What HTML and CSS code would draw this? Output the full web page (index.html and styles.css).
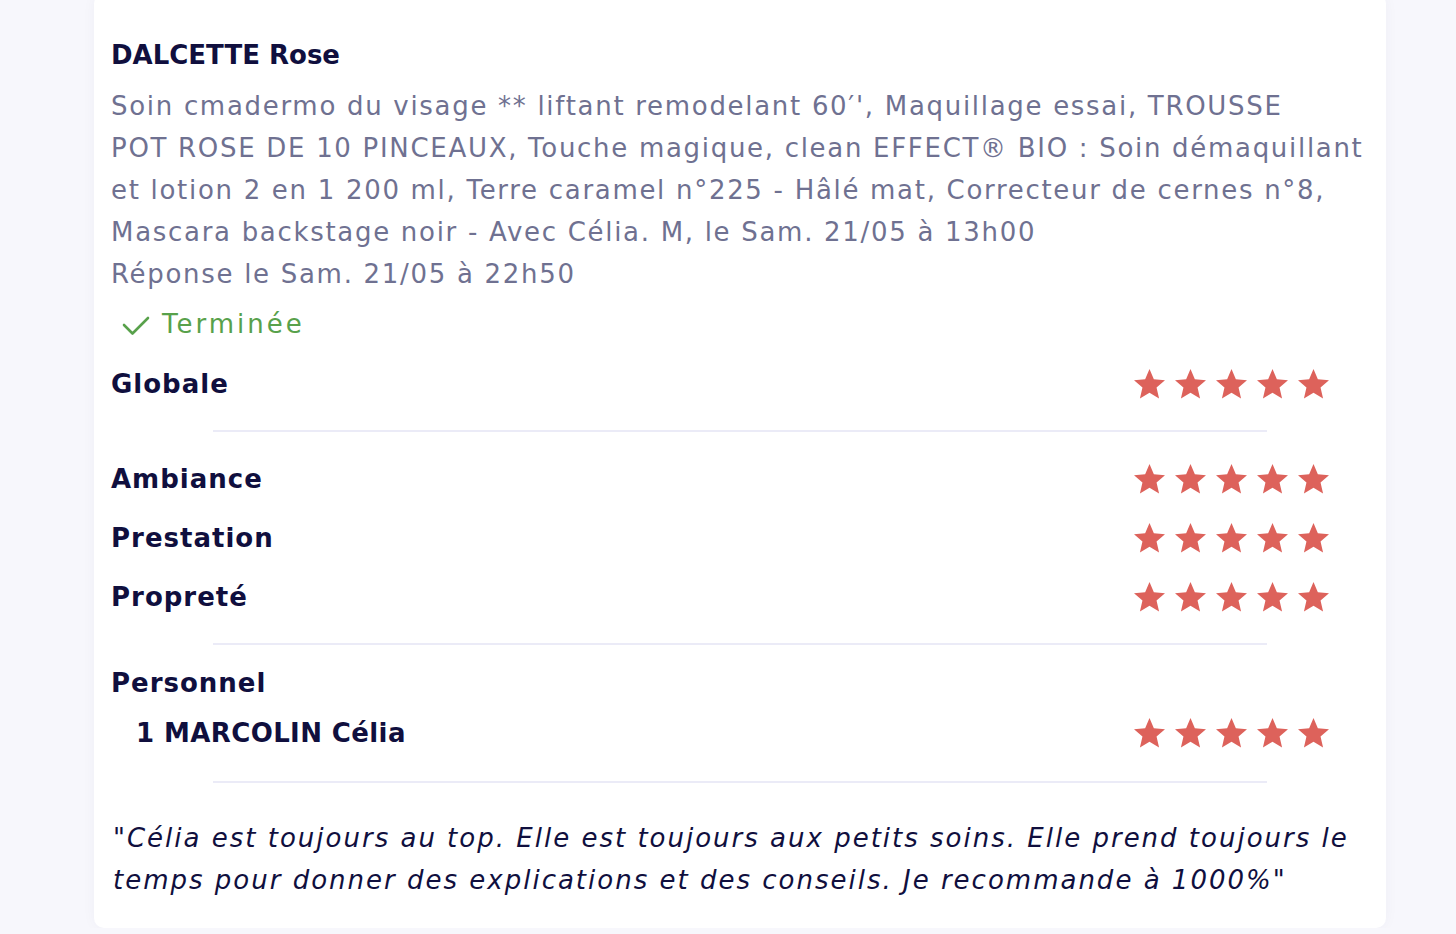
FILE: index.html
```html
<!DOCTYPE html>
<html lang="fr">

<head>
    <meta charset="UTF-8">
    <title>Avis client</title>
    <meta name="viewport" content="width=device-width, initial-scale=1.0">
    <link rel="stylesheet" href="styles.css">
</head>

<body>
    <svg class="sprite" xmlns="http://www.w3.org/2000/svg">
        <symbol id="star" viewBox="2 2 20 19.27">
            <path d="M12 17.27L18.18 21l-1.64-7.03L22 9.24l-7.19-.61L12 2 9.19 8.63 2 9.24l5.46 4.73L5.82 21z" />
        </symbol>
    </svg>

    <div class="page">
        <article class="review">
            <h2 class="client">DALCETTE Rose</h2>
            <p class="details">Soin cmadermo du visage ** liftant remodelant 60′', Maquillage essai, TROUSSE<br>POT ROSE DE 10 PINCEAUX, Touche magique, clean EFFECT® BIO : Soin démaquillant<br>et lotion 2 en 1 200 ml, Terre caramel n°225 - Hâlé mat, Correcteur de cernes n°8,<br>Mascara backstage noir - Avec Célia. M, le Sam. 21/05 à 13h00<br>Réponse le Sam. 21/05 à 22h50</p>

            <div class="status">
                <svg class="check" viewBox="0 0 28 20"><polyline points="2,9 10.5,17.5 26,2" /></svg>
                <span>Terminée</span>
            </div>

            <div class="rating">
                <span class="label">Globale</span>
                <div class="stars">
                    <svg><use href="#star" /></svg><svg><use href="#star" /></svg><svg><use href="#star" /></svg><svg><use href="#star" /></svg><svg><use href="#star" /></svg>
                </div>
            </div>

            <hr class="divider">

            <div class="rating">
                <span class="label">Ambiance</span>
                <div class="stars">
                    <svg><use href="#star" /></svg><svg><use href="#star" /></svg><svg><use href="#star" /></svg><svg><use href="#star" /></svg><svg><use href="#star" /></svg>
                </div>
            </div>
            <div class="rating">
                <span class="label">Prestation</span>
                <div class="stars">
                    <svg><use href="#star" /></svg><svg><use href="#star" /></svg><svg><use href="#star" /></svg><svg><use href="#star" /></svg><svg><use href="#star" /></svg>
                </div>
            </div>
            <div class="rating">
                <span class="label">Propreté</span>
                <div class="stars">
                    <svg><use href="#star" /></svg><svg><use href="#star" /></svg><svg><use href="#star" /></svg><svg><use href="#star" /></svg><svg><use href="#star" /></svg>
                </div>
            </div>

            <hr class="divider">

            <h3 class="label staff-title">Personnel</h3>
            <div class="rating staff">
                <span class="label">1 MARCOLIN Célia</span>
                <div class="stars">
                    <svg><use href="#star" /></svg><svg><use href="#star" /></svg><svg><use href="#star" /></svg><svg><use href="#star" /></svg><svg><use href="#star" /></svg>
                </div>
            </div>

            <hr class="divider">

            <p class="comment">"Célia est toujours au top. Elle est toujours aux petits soins. Elle prend toujours le<br>temps pour donner des explications et des conseils. Je recommande à 1000%"</p>
        </article>
    </div>
</body>

</html>
```

FILE: styles.css
```css
body {
    margin: 0;
    background-color: #f7f7fc;
    font-family: 'DejaVu Sans', sans-serif;
    color: #100f3e;
}

.sprite {
    display: none;
}

.page {
    padding: 0 70px 0 94px;
    margin-top: -6px;
}

.review {
    background-color: white;
    border-radius: 10px;
    box-shadow: 0 0 14px rgba(40, 40, 110, 0.04);
    padding: 40px 17px 27px 17px;
}

.client {
    margin: 0;
    font-size: 26px;
    line-height: 42px;
    font-weight: 700;
    letter-spacing: 0;
}

.details {
    margin: 9px 0 0 0;
    font-size: 26px;
    line-height: 42px;
    letter-spacing: 1.7px;
    color: #6f7191;
    white-space: nowrap;
}

.status {
    display: flex;
    align-items: center;
    gap: 12px;
    margin: 8px 0 9px 11px;
    height: 42px;
    font-size: 26px;
    letter-spacing: 3px;
    color: #58a14b;
}

.check {
    width: 28px;
    height: 20px;
    margin-top: 4px;
    fill: none;
    stroke: #58a14b;
    stroke-width: 2.6;
    stroke-linecap: round;
    stroke-linejoin: round;
}

.rating {
    display: flex;
    align-items: center;
    justify-content: space-between;
    height: 59px;
}

.label {
    margin: 0;
    font-size: 26px;
    font-weight: 700;
    letter-spacing: 1px;
    color: #100f3e;
}

.staff-title {
    line-height: 40px;
    margin-top: 18px;
}

.staff .label {
    padding-left: 25px;
    letter-spacing: 0.4px;
}

.stars {
    display: flex;
    gap: 10px;
    margin-right: 40px;
}

.stars svg {
    width: 31px;
    height: 30px;
    fill: #dd625b;
}

.divider {
    border: none;
    height: 2px;
    background-color: #ebebf7;
    margin: 17px 102px 17px 102px;
}

.staff + .divider {
    margin-top: 19px;
}

.comment {
    margin: 34px 0 0 2px;
    font-size: 26px;
    line-height: 42px;
    font-style: italic;
    letter-spacing: 2px;
    white-space: nowrap;
}
```
